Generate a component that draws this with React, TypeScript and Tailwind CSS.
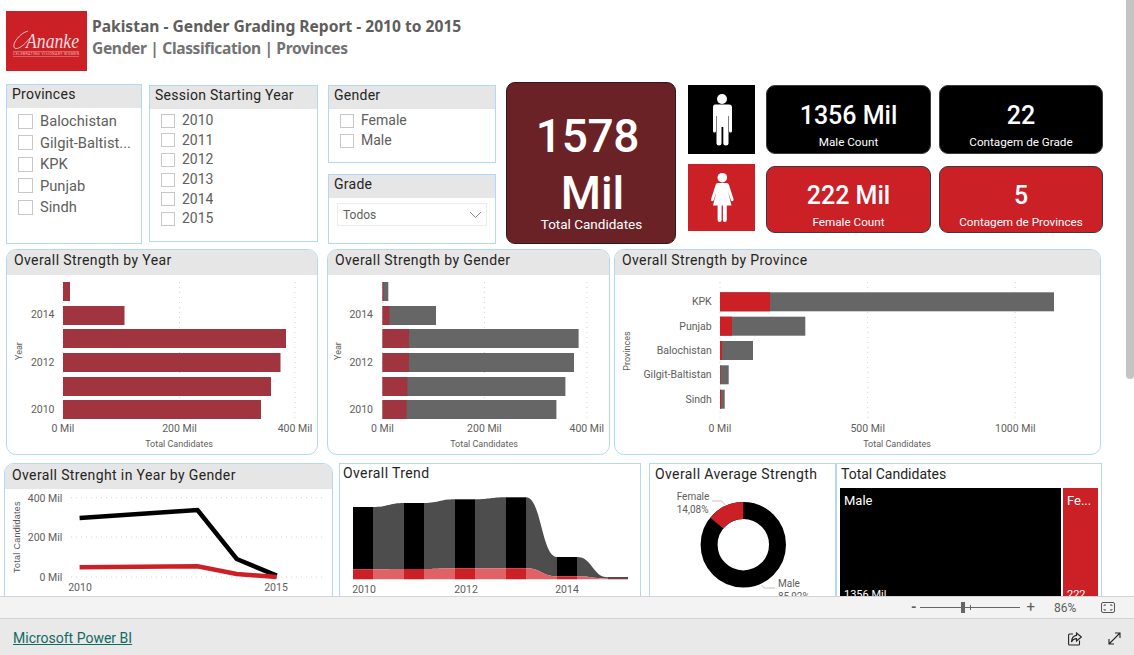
import React from "react";

const AXIS = "#605e5c";

function Check({ label, box, text }: { label: string; box: string; text: string }) {
  return (
    <div className="flex items-center">
      <span className={`shrink-0 border border-[#c8c8c8] bg-white ${box}`} />
      <span className={`truncate text-[#605e5c] ${text}`}>{label}</span>
    </div>
  );
}

function SlicerHead({ title }: { title: string }) {
  return <div className="flex h-[23px] items-center bg-[#e6e6e6] pb-[4px] pl-[5px] text-[14px] tracking-[0.27px] text-[#252423]">{title}</div>;
}

function Kpi({ value, label, cls }: { value: string; label: string; cls: string }) {
  return (
    <div className={`flex flex-col items-center rounded-[9px] border border-[#3a3a3a] text-white ${cls}`}>
      <div className="text-[25px] leading-[30px] font-medium">{value}</div>
      <div className="mt-[4px] text-[11.7px] leading-[15px]">{label}</div>
    </div>
  );
}

function ChartPanel({ title, w, children }: { title: string; w: string; children: React.ReactNode }) {
  return (
    <div className={`h-[206px] overflow-hidden rounded-[10px] border border-[#b3d7f5] bg-white ${w}`}>
      <div className="flex h-[25px] items-center bg-[#e6e6e6] pb-[4px] pl-[7px] text-[14px] tracking-[0.4px] text-[#252423]">{title}</div>
      {children}
    </div>
  );
}

function HBars({
  box,
  axis,
  grid,
  ticks,
  rows,
  color,
  years,
  yearX,
  yearLabelX,
  axisTitleX,
  yTitle,
}: {
  box: number[];
  axis: number;
  grid: number[];
  ticks: string[];
  rows: { y: number; red: number; end?: number }[];
  color: string;
  years: { t: string; y: number }[];
  yearX: number;
  yearLabelX: number;
  axisTitleX: number;
  yTitle: string;
}) {
  return (
    <svg width={box[2]} height={box[3]} viewBox={box.join(" ")} className="block">
      {grid.map((x) => (
        <line key={x} x1={x} x2={x} y1={281} y2={419} stroke="#d4d4d4" strokeDasharray="1 4" />
      ))}
      {rows.map((r) => (
        <g key={r.y}>
          {r.end && <rect x={axis} y={r.y} width={r.end - axis} height={19} fill="#666666" />}
          <rect x={axis} y={r.y} width={r.red - axis} height={19} fill={color} />
        </g>
      ))}
      {grid.map((x, i) => (
        <text key={x} x={x} y={430.5} textAnchor="middle" fontSize={10.5} fill={AXIS}>
          {ticks[i]}
        </text>
      ))}
      {years.map((y) => (
        <text key={y.t} x={yearX} y={y.y} textAnchor="end" fontSize={10.5} fill={AXIS}>
          {y.t}
        </text>
      ))}
      <text x={axisTitleX} y={445.5} textAnchor="middle" fontSize={9} fill={AXIS}>
        Total Candidates
      </text>
      <text transform={`translate(${yearLabelX} 350) rotate(-90)`} textAnchor="middle" fontSize={9} fill={AXIS}>
        {yTitle}
      </text>
    </svg>
  );
}

const yearRows = [281, 305, 328, 352, 376, 399];

function TrendChart() {
  const cols = [
    { x: 353, top: 507, red: 569.3 },
    { x: 404, top: 503, red: 569 },
    { x: 455, top: 499.3, red: 568.3 },
    { x: 506, top: 497.3, red: 568.3 },
    { x: 557, top: 557, red: 576.3 },
    { x: 608, top: 577.3, red: 578.7 },
  ];
  const base = 579.3;
  return (
    <svg width={300} height={106} viewBox="340 490 300 106" className="block">
      {cols.slice(0, -1).map((c, i) => {
        const n = cols[i + 1];
        const a = c.x + 20;
        const b = n.x;
        const m = (a + b) / 2;
        return (
          <g key={c.x}>
            <path d={`M${a} ${c.top} C${m} ${c.top} ${m} ${n.top} ${b} ${n.top} L${b} ${n.red} C${m} ${n.red} ${m} ${c.red} ${a} ${c.red} Z`} fill="#4d4d4d" />
            <path d={`M${a} ${c.red} C${m} ${c.red} ${m} ${n.red} ${b} ${n.red} L${b} ${base} L${a} ${base} Z`} fill="#de6266" />
          </g>
        );
      })}
      {cols.map((c) => (
        <g key={c.x}>
          <rect x={c.x} y={c.top} width={20} height={c.red - c.top} fill="#000000" />
          <rect x={c.x} y={c.red} width={20} height={base - c.red} fill="#cc2027" />
        </g>
      ))}
      {[
        ["2010", 364],
        ["2012", 466],
        ["2014", 567],
      ].map(([t, x]) => (
        <text key={t} x={x} y={593} textAnchor="middle" fontSize={10.5} fill={AXIS}>
          {t}
        </text>
      ))}
    </svg>
  );
}

function Donut() {
  const cx = 743.3;
  const cy = 544.7;
  const R = 42.7;
  const r = 25.7;
  const a = (-14.08 / 100) * 2 * Math.PI;
  const x1 = cx + R * Math.sin(a);
  const y1 = cy - R * Math.cos(a);
  const x2 = cx + r * Math.sin(a);
  const y2 = cy - r * Math.cos(a);
  return (
    <svg width={185} height={108} viewBox="650 488 185 108" className="block">
      <circle cx={cx} cy={cy} r={(R + r) / 2} fill="none" stroke="#000000" strokeWidth={R - r} />
      <path d={`M${cx} ${cy - R} A${R} ${R} 0 0 0 ${x1} ${y1} L${x2} ${y2} A${r} ${r} 0 0 1 ${cx} ${cy - r} Z`} fill="#cc2027" />
      <path d="M712 501 H721.7 L725 505" fill="none" stroke="#c4c4c4" />
      <path d="M761.7 585 L764 588 H775" fill="none" stroke="#c4c4c4" />
      <text x={676.7} y={499.5} fontSize={10} fill={AXIS}>Female</text>
      <text x={676.7} y={513} fontSize={10} fill={AXIS}>14,08%</text>
      <text x={778} y={586.5} fontSize={10} fill={AXIS}>Male</text>
      <text x={778} y={600} fontSize={10} fill={AXIS}>85,92%</text>
    </svg>
  );
}

function Logo() {
  return (
    <svg width={81} height={60} viewBox="0 0 81 60" className="block shrink-0">
      <rect width={81} height={60} fill="#cc2027" />
      <path d="M22 20 C14 22 6.5 32 8 36 C9.5 40 17 36 24 27" fill="none" stroke="#f3cfd1" strokeWidth={0.9} />
      <text x={20} y={37} fontSize={20} fontStyle="italic" fontFamily="'Liberation Serif',serif" fill="#f6dcdd" textLength={53} lengthAdjust="spacingAndGlyphs">
        Ananke
      </text>
      <line x1={7} x2={73} y1={40.5} y2={40.5} stroke="#e9a3a6" strokeWidth={0.5} />
      <text x={7} y={44.4} fontSize={3.6} fill="#f0b9bb" textLength={66}>CELEBRATING VISIONARY WOMEN</text>
      <line x1={7} x2={73} y1={45.5} y2={45.5} stroke="#e9a3a6" strokeWidth={0.5} />
    </svg>
  );
}

function MaleIcon() {
  return (
    <svg width={67} height={69} viewBox="0 0 67 69" className="block">
      <rect width={67} height={69} fill="#000000" />
      <g fill="#ffffff">
        <circle cx={34} cy={14} r={5} />
        <path d="M27 19.5 H41 Q44 19.5 44 22.5 V46 Q44 47.5 42.5 47.5 Q41 47.5 41 46 V31 H40.5 V58.5 Q40.5 60.5 38 60.5 Q35.3 60.5 35.3 58.5 V42 H33.5 V58.5 Q33.5 60.5 31 60.5 Q28.5 60.5 28.5 58.5 V31 H28 V46 Q28 47.5 26.5 47.5 Q25 47.5 25 46 V22.5 Q25 19.5 27 19.5 Z" />
      </g>
    </svg>
  );
}

function FemaleIcon() {
  return (
    <svg width={67} height={67} viewBox="0 0 67 67" className="block">
      <rect width={67} height={67} fill="#cc2027" />
      <g fill="#ffffff">
        <circle cx={34.3} cy={13.7} r={4.8} />
        <path d="M30 19 H38.6 Q40.5 19 41 21 L45.5 35 Q46 37 44.5 37.2 Q43.3 37.4 42.8 36 L40 27.5 L43.5 41.5 H38.8 V56 Q38.8 58 36.7 58 Q34.9 58 34.9 56 V41.5 H33.6 V56 Q33.6 58 31.7 58 Q29.6 58 29.6 56 V41.5 H25 L28.5 27.5 L25.8 36 Q25.3 37.4 24.1 37.2 Q22.6 37 23.1 35 L27.6 21 Q28.1 19 30 19 Z" />
      </g>
    </svg>
  );
}

function LineChart() {
  return (
    <svg width={327} height={107} viewBox="5 489 327 107" className="block">
      {[497.7, 537, 577].map((y, i) => (
        <g key={y}>
          <line x1={71} x2={322} y1={y} y2={y} stroke="#d4d4d4" strokeDasharray="1 4" />
          <text x={62.4} y={y + 4} textAnchor="end" fontSize={10.5} fill={AXIS}>
            {["400 Mil", "200 Mil", "0 Mil"][i]}
          </text>
        </g>
      ))}
      <polyline points="79.6,518 197.5,510 236.7,559 276.7,575.7" fill="none" stroke="#000000" strokeWidth={4.5} />
      <polyline points="79.6,567.3 197.5,566.3 236.7,574 276.7,577" fill="none" stroke="#cc2027" strokeWidth={4.5} />
      <text x={80} y={591} textAnchor="middle" fontSize={10.5} fill={AXIS}>2010</text>
      <text x={276} y={591} textAnchor="middle" fontSize={10.5} fill={AXIS}>2015</text>
      <text transform="translate(20 537) rotate(-90)" textAnchor="middle" fontSize={9} letterSpacing={0.3} fontFamily="'Liberation Sans',sans-serif" fill="#555555">
        Total Candidates
      </text>
    </svg>
  );
}

export default function App() {
  return (
    <div className="flex h-[655px] w-[1134px] flex-col overflow-hidden bg-white font-['Roboto',sans-serif]">
      <div className="flex h-[596px] shrink-0 overflow-hidden">
        <div className="w-[1126px] shrink-0 pt-[11px] pl-[6px]">
          {/* header */}
          <div className="flex h-[60px]">
            <Logo />
            <div className="ml-[5px] pt-[5px] font-['Noto_Sans',sans-serif] text-[15.6px] leading-[21.5px] font-bold">
              <div className="text-[#605e5c]">Pakistan - Gender Grading Report - 2010 to 2015</div>
              <div className="tracking-[-0.37px] text-[#737373]">Gender | Classification | Provinces</div>
            </div>
          </div>

          {/* slicers + KPI */}
          <div className="mt-[11px] flex h-[162px] items-start">
            <div className="mt-[2px] h-[160px] w-[136px] border border-[#b3d7f5]">
              <SlicerHead title="Provinces" />
              <div className="flex flex-col gap-[3.5px] pt-[4px] pl-[11px]">
                {["Balochistan", "Gilgit-Baltist...", "KPK", "Punjab", "Sindh"].map((p) => (
                  <Check key={p} label={p} box="mr-[7px] h-[15px] w-[15px]" text="text-[14.7px] leading-[18px]" />
                ))}
              </div>
            </div>
            <div className="mt-[3px] ml-[7px] h-[157px] w-[169px] border border-[#b3d7f5]">
              <SlicerHead title="Session Starting Year" />
              <div className="flex flex-col gap-[2.7px] pt-[3px] pl-[11px]">
                {["2010", "2011", "2012", "2013", "2014", "2015"].map((p) => (
                  <Check key={p} label={p} box="mr-[7px] h-[14px] w-[14px]" text="text-[14px] leading-[17px]" />
                ))}
              </div>
            </div>
            <div className="mt-[3px] ml-[10px] w-[168px]">
              <div className="h-[78px] border border-[#b3d7f5]">
                <SlicerHead title="Gender" />
                <div className="flex flex-col gap-[3px] pt-[3px] pl-[11px]">
                  {["Female", "Male"].map((p) => (
                    <Check key={p} label={p} box="mr-[7px] h-[14px] w-[14px]" text="text-[14px] leading-[17px]" />
                  ))}
                </div>
              </div>
              <div className="mt-[11px] h-[70px] border border-[#b3d7f5]">
                <SlicerHead title="Grade" />
                <div className="mx-[8px] mt-[5px] flex h-[23px] items-center justify-between border border-[#ececec] pr-[4px] pl-[5px] text-[12px] text-[#605e5c]">
                  <span>Todos</span>
                  <svg width={13} height={8} viewBox="0 0 13 8">
                    <path d="M1 1 L6.5 6.5 L12 1" fill="none" stroke="#7f8a99" strokeWidth={1} />
                  </svg>
                </div>
              </div>
            </div>
            <div className="ml-[10px] flex h-[162px] w-[170px] flex-col items-center rounded-[9px] border border-[#2e1a1b] bg-[#6b2227] text-white">
              <div className="mt-[26px] mr-[7px] text-[46px] leading-[54px] font-medium tracking-[-0.3px]">1578</div>
              <div className="mt-[8px] ml-[3px] text-[46px] leading-[44px] font-medium">Mil</div>
              <div className="ml-[1px] text-[13.5px] leading-[18px]">Total Candidates</div>
            </div>
            <div className="mt-[3px] ml-[12px]">
              <div className="flex items-start">
                <MaleIcon />
                <div className="ml-[11px] flex gap-[8px]">
                  <Kpi value="1356 Mil" label="Male Count" cls="h-[69px] w-[165px] bg-black pt-[15px]" />
                  <Kpi value="22" label="Contagem de Grade" cls="h-[69px] w-[164px] bg-black pt-[15px]" />
                </div>
              </div>
              <div className="mt-[10px] flex items-start">
                <FemaleIcon />
                <div className="mt-[2px] ml-[11px] flex gap-[8px]">
                  <Kpi value="222 Mil" label="Female Count" cls="h-[67px] w-[165px] bg-[#cc2027] pt-[14px]" />
                  <Kpi value="5" label="Contagem de Provinces" cls="h-[67px] w-[164px] bg-[#cc2027] pt-[14px]" />
                </div>
              </div>
            </div>
          </div>

          {/* middle charts */}
          <div className="mt-[5px] flex">
            <ChartPanel title="Overall Strength by Year" w="w-[312px]">
              <HBars
                box={[7, 274, 310, 180]}
                axis={63}
                grid={[63, 179.5, 295]}
                ticks={["0 Mil", "200 Mil", "400 Mil"]}
                rows={[
                  { y: yearRows[0], red: 70 },
                  { y: yearRows[1], red: 124.5 },
                  { y: yearRows[2], red: 286 },
                  { y: yearRows[3], red: 280.5 },
                  { y: yearRows[4], red: 271 },
                  { y: yearRows[5], red: 261 },
                ]}
                color="#a0343f"
                years={[
                  { t: "2014", y: 317 },
                  { t: "2012", y: 365 },
                  { t: "2010", y: 412 },
                ]}
                yearX={54.5}
                yearLabelX={22}
                axisTitleX={179}
                yTitle="Year"
              />
            </ChartPanel>
            <div className="ml-[9px]">
              <ChartPanel title="Overall Strength by Gender" w="w-[283px]">
                <HBars
                  box={[328, 274, 281, 180]}
                  axis={382.5}
                  grid={[382.5, 484.4, 586.8]}
                  ticks={["0 Mil", "200 Mil", "400 Mil"]}
                  rows={[
                    { y: yearRows[0], red: 383.6, end: 388.3 },
                    { y: yearRows[1], red: 389.5, end: 436 },
                    { y: yearRows[2], red: 409, end: 578.6 },
                    { y: yearRows[3], red: 409, end: 574 },
                    { y: yearRows[4], red: 407.4, end: 565.4 },
                    { y: yearRows[5], red: 406.6, end: 556.4 },
                  ]}
                  color="#a0343f"
                  years={[
                    { t: "2014", y: 317 },
                    { t: "2012", y: 365 },
                    { t: "2010", y: 412 },
                  ]}
                  yearX={373}
                  yearLabelX={341}
                  axisTitleX={484}
                  yTitle="Year"
                />
              </ChartPanel>
            </div>
            <div className="ml-[4px]">
              <ChartPanel title="Overall Strength by Province" w="w-[487px]">
                <HBars
                  box={[615, 274, 485, 180]}
                  axis={720}
                  grid={[720, 867.7, 1015.3]}
                  ticks={["0 Mil", "500 Mil", "1000 Mil"]}
                  rows={[
                    { y: 291.3, red: 770, end: 1054 },
                    { y: 315.7, red: 732, end: 805.3 },
                    { y: 340, red: 722, end: 753 },
                    { y: 364.3, red: 720.5, end: 728.7 },
                    { y: 388.7, red: 721, end: 724.7 },
                  ]}
                  color="#cc2027"
                  years={[
                    { t: "KPK", y: 304 },
                    { t: "Punjab", y: 329 },
                    { t: "Balochistan", y: 353 },
                    { t: "Gilgit-Baltistan", y: 377 },
                    { t: "Sindh", y: 402 },
                  ]}
                  yearX={711.7}
                  yearLabelX={630}
                  axisTitleX={897}
                  yTitle="Provinces"
                />
              </ChartPanel>
            </div>
          </div>

          {/* lower charts */}
          <div className="mt-[8px] -ml-[2px] flex items-stretch">
            <div className="h-[140px] w-[329px] overflow-hidden rounded-t-[10px] border border-[#b3d7f5]">
              <div className="flex h-[25px] items-center bg-[#e6e6e6] pb-[2px] pl-[7px] text-[14px] tracking-[0.38px] text-[#252423]">Overall Strenght in Year by Gender</div>
              <LineChart />
            </div>
            <div className="ml-[6px] h-[140px] w-[302px] overflow-hidden border border-[#b3d7f5]">
              <div className="h-[26px] pl-[3px] text-[14px] leading-[18px] tracking-[0.4px] text-[#252423]">Overall Trend</div>
              <TrendChart />
            </div>
            <div className="ml-[8px] h-[140px] w-[188px] overflow-hidden border border-[#b3d7f5]">
              <div className="h-[24px] pt-[1px] pl-[5px] text-[14px] leading-[18px] tracking-[0.4px] text-[#252423]">Overall Average Strength</div>
              <Donut />
            </div>
            <div className="-ml-[2px] h-[140px] w-[267px] overflow-hidden border border-[#b3d7f5]">
              <div className="h-[24px] pt-[1px] pl-[5px] text-[14px] leading-[18px] text-[#252423]">Total Candidates</div>
              <div className="flex gap-[2px] pl-[4px] text-white">
                <div className="flex h-[120px] w-[221px] flex-col justify-between bg-black pt-[3px] pl-[4px] text-[13px]">
                  <span>Male</span>
                  <span className="mb-[7px] text-[11px] leading-[12px]">1356 Mil</span>
                </div>
                <div className="flex h-[120px] w-[35px] flex-col justify-between bg-[#cc2027] pt-[3px] pl-[4px] text-[13px]">
                  <span>Fe...</span>
                  <span className="mb-[7px] text-[11px] leading-[12px]">222</span>
                </div>
              </div>
            </div>
          </div>
        </div>
        <div className="ml-auto h-[379px] w-[8px] rounded-b-[4px] bg-[#c4c4c4]" />
      </div>

      {/* zoom bar */}
      <div className="flex h-[23px] shrink-0 items-center justify-end border-y border-[#d4d4d4] bg-[#f3f3f3] pr-[19px] text-[#605e5c]">
        <span className="text-[14px] font-bold">-</span>
        <div className="relative mx-[4px] h-px w-[100px] bg-[#666666]">
          <span className="absolute top-[-5px] left-[41px] h-[11px] w-[4px] bg-[#666666]" />
          <span className="absolute top-[-2px] left-[50px] h-[5px] w-px bg-[#666666]" />
        </div>
        <span className="ml-[2px] text-[15px] leading-none">+</span>
        <span className="ml-[19px] w-[26px] text-[12px]">86%</span>
        <svg className="ml-[21px]" width={14} height={11} viewBox="0 0 14 11" fill="none" stroke="#555555">
          <rect x={0.5} y={0.5} width={13} height={10} rx={1.5} />
          <path d="M3 4 V3 H5 M9 3 H11 V4 M11 7 V8 H9 M5 8 H3 V7" />
        </svg>
      </div>

      {/* footer */}
      <div className="flex flex-1 items-center justify-between bg-[#e9e9e9] px-[13px] pt-[3px]">
        <a className="text-[14px] text-[#0f6b63] underline">Microsoft Power BI</a>
        <div className="flex items-center gap-[26px]">
          <svg width={14} height={14} viewBox="0 0 14 14" fill="none" stroke="#252423" strokeWidth={1.1}>
            <path d="M5 2 H1.5 Q0.6 2 0.6 3 V12 Q0.6 13 1.5 13 H10.5 Q11.5 13 11.5 12 V8.5" />
            <path d="M8.5 1 L13.4 5 L8.5 9 V6.6 Q5 6.6 3.5 10 Q3.8 4 8.5 3.4 Z" />
          </svg>
          <svg width={13} height={13} viewBox="0 0 13 13" fill="none" stroke="#252423" strokeWidth={1.1}>
            <path d="M1 12 L12 1 M7 1 H12 V6 M1 7 V12 H6" />
          </svg>
        </div>
      </div>
    </div>
  );
}
